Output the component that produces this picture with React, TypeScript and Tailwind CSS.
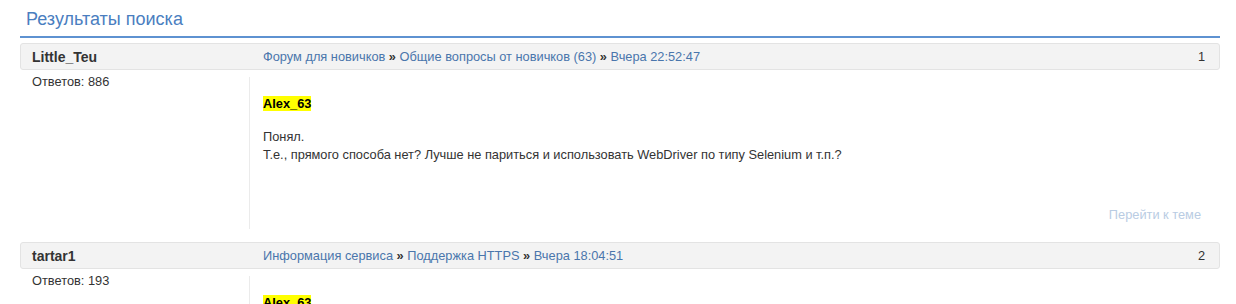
import React from "react";

type Crumb = {
  label: string;
};

type Post = {
  id: number;
  author: string;
  replies: number;
  crumbs: Crumb[];
  quoted: string;
  lines: string[];
};

const posts: Post[] = [
  {
    id: 1,
    author: "Little_Teu",
    replies: 886,
    crumbs: [
      { label: "Форум для новичков" },
      { label: "Общие вопросы от новичков (63)" },
      { label: "Вчера 22:52:47" },
    ],
    quoted: "Alex_63",
    lines: [
      "Понял.",
      "Т.е., прямого способа нет? Лучше не париться и использовать WebDriver по типу Selenium и т.п.?",
    ],
  },
  {
    id: 2,
    author: "tartar1",
    replies: 193,
    crumbs: [
      { label: "Информация сервиса" },
      { label: "Поддержка HTTPS" },
      { label: "Вчера 18:04:51" },
    ],
    quoted: "Alex_63",
    lines: ["Спасибо, всё заработало.", "Сертификат обновился после перезапуска."],
  },
];

function PostCard({ post }: { post: Post }) {
  return (
    <div className="mb-[13px]">
      <div className="flex h-[27px] items-center rounded-[3px] border border-[#e3e3e3] bg-[#f3f3f3]">
        <div className="w-[242px] shrink-0 pl-[11px] text-[14px] font-bold leading-[18px] text-[#333]">
          {post.author}
        </div>
        <div className="flex-1 text-[12.8px] leading-[18px] text-[#333]">
          {post.crumbs.map((c, i) => (
            <React.Fragment key={i}>
              {i > 0 && <span className="font-bold"> » </span>}
              <a href="#" className="text-[#4a76ac] hover:underline">
                {c.label}
              </a>
            </React.Fragment>
          ))}
        </div>
        <div className="pr-[14px] text-[12.8px] leading-[18px] text-[#333]">{post.id}</div>
      </div>

      <div className="flex text-[12.8px] leading-[18px] text-[#333]">
        <div className="w-[229px] shrink-0 pl-3 pt-[3px]">Ответов: {post.replies}</div>
        <div className="mt-[7px] flex flex-1 flex-col border-l border-[#ebebeb] pl-[13px] pr-[19px] pt-[18px] pb-[5px]">
          <div>
            <span className="bg-[#ffff00] font-bold text-black">{post.quoted}</span>
          </div>
          <div className="mt-[15px]">
            {post.lines.map((l, i) => (
              <div key={i}>{l}</div>
            ))}
          </div>
          <div className="mt-[42px] text-right">
            <a href="#" className="text-[#b9cce3]">
              Перейти к теме
            </a>
          </div>
        </div>
      </div>
    </div>
  );
}

export default function App() {
  return (
    <div
      className="h-[304px] overflow-hidden bg-white"
      style={{ fontFamily: '"Liberation Sans", Arial, sans-serif' }}
    >
      <div className="ml-5 w-[1200px]">
        <div className="border-b-2 border-[#5e92d1] pl-[6px] pt-[9px] pb-[7px] text-[18px] leading-5 text-[#4a7ebf]">
          Результаты поиска
        </div>
        <div className="mt-[5px]">
          {posts.map((p) => (
            <PostCard key={p.id} post={p} />
          ))}
        </div>
      </div>
    </div>
  );
}
